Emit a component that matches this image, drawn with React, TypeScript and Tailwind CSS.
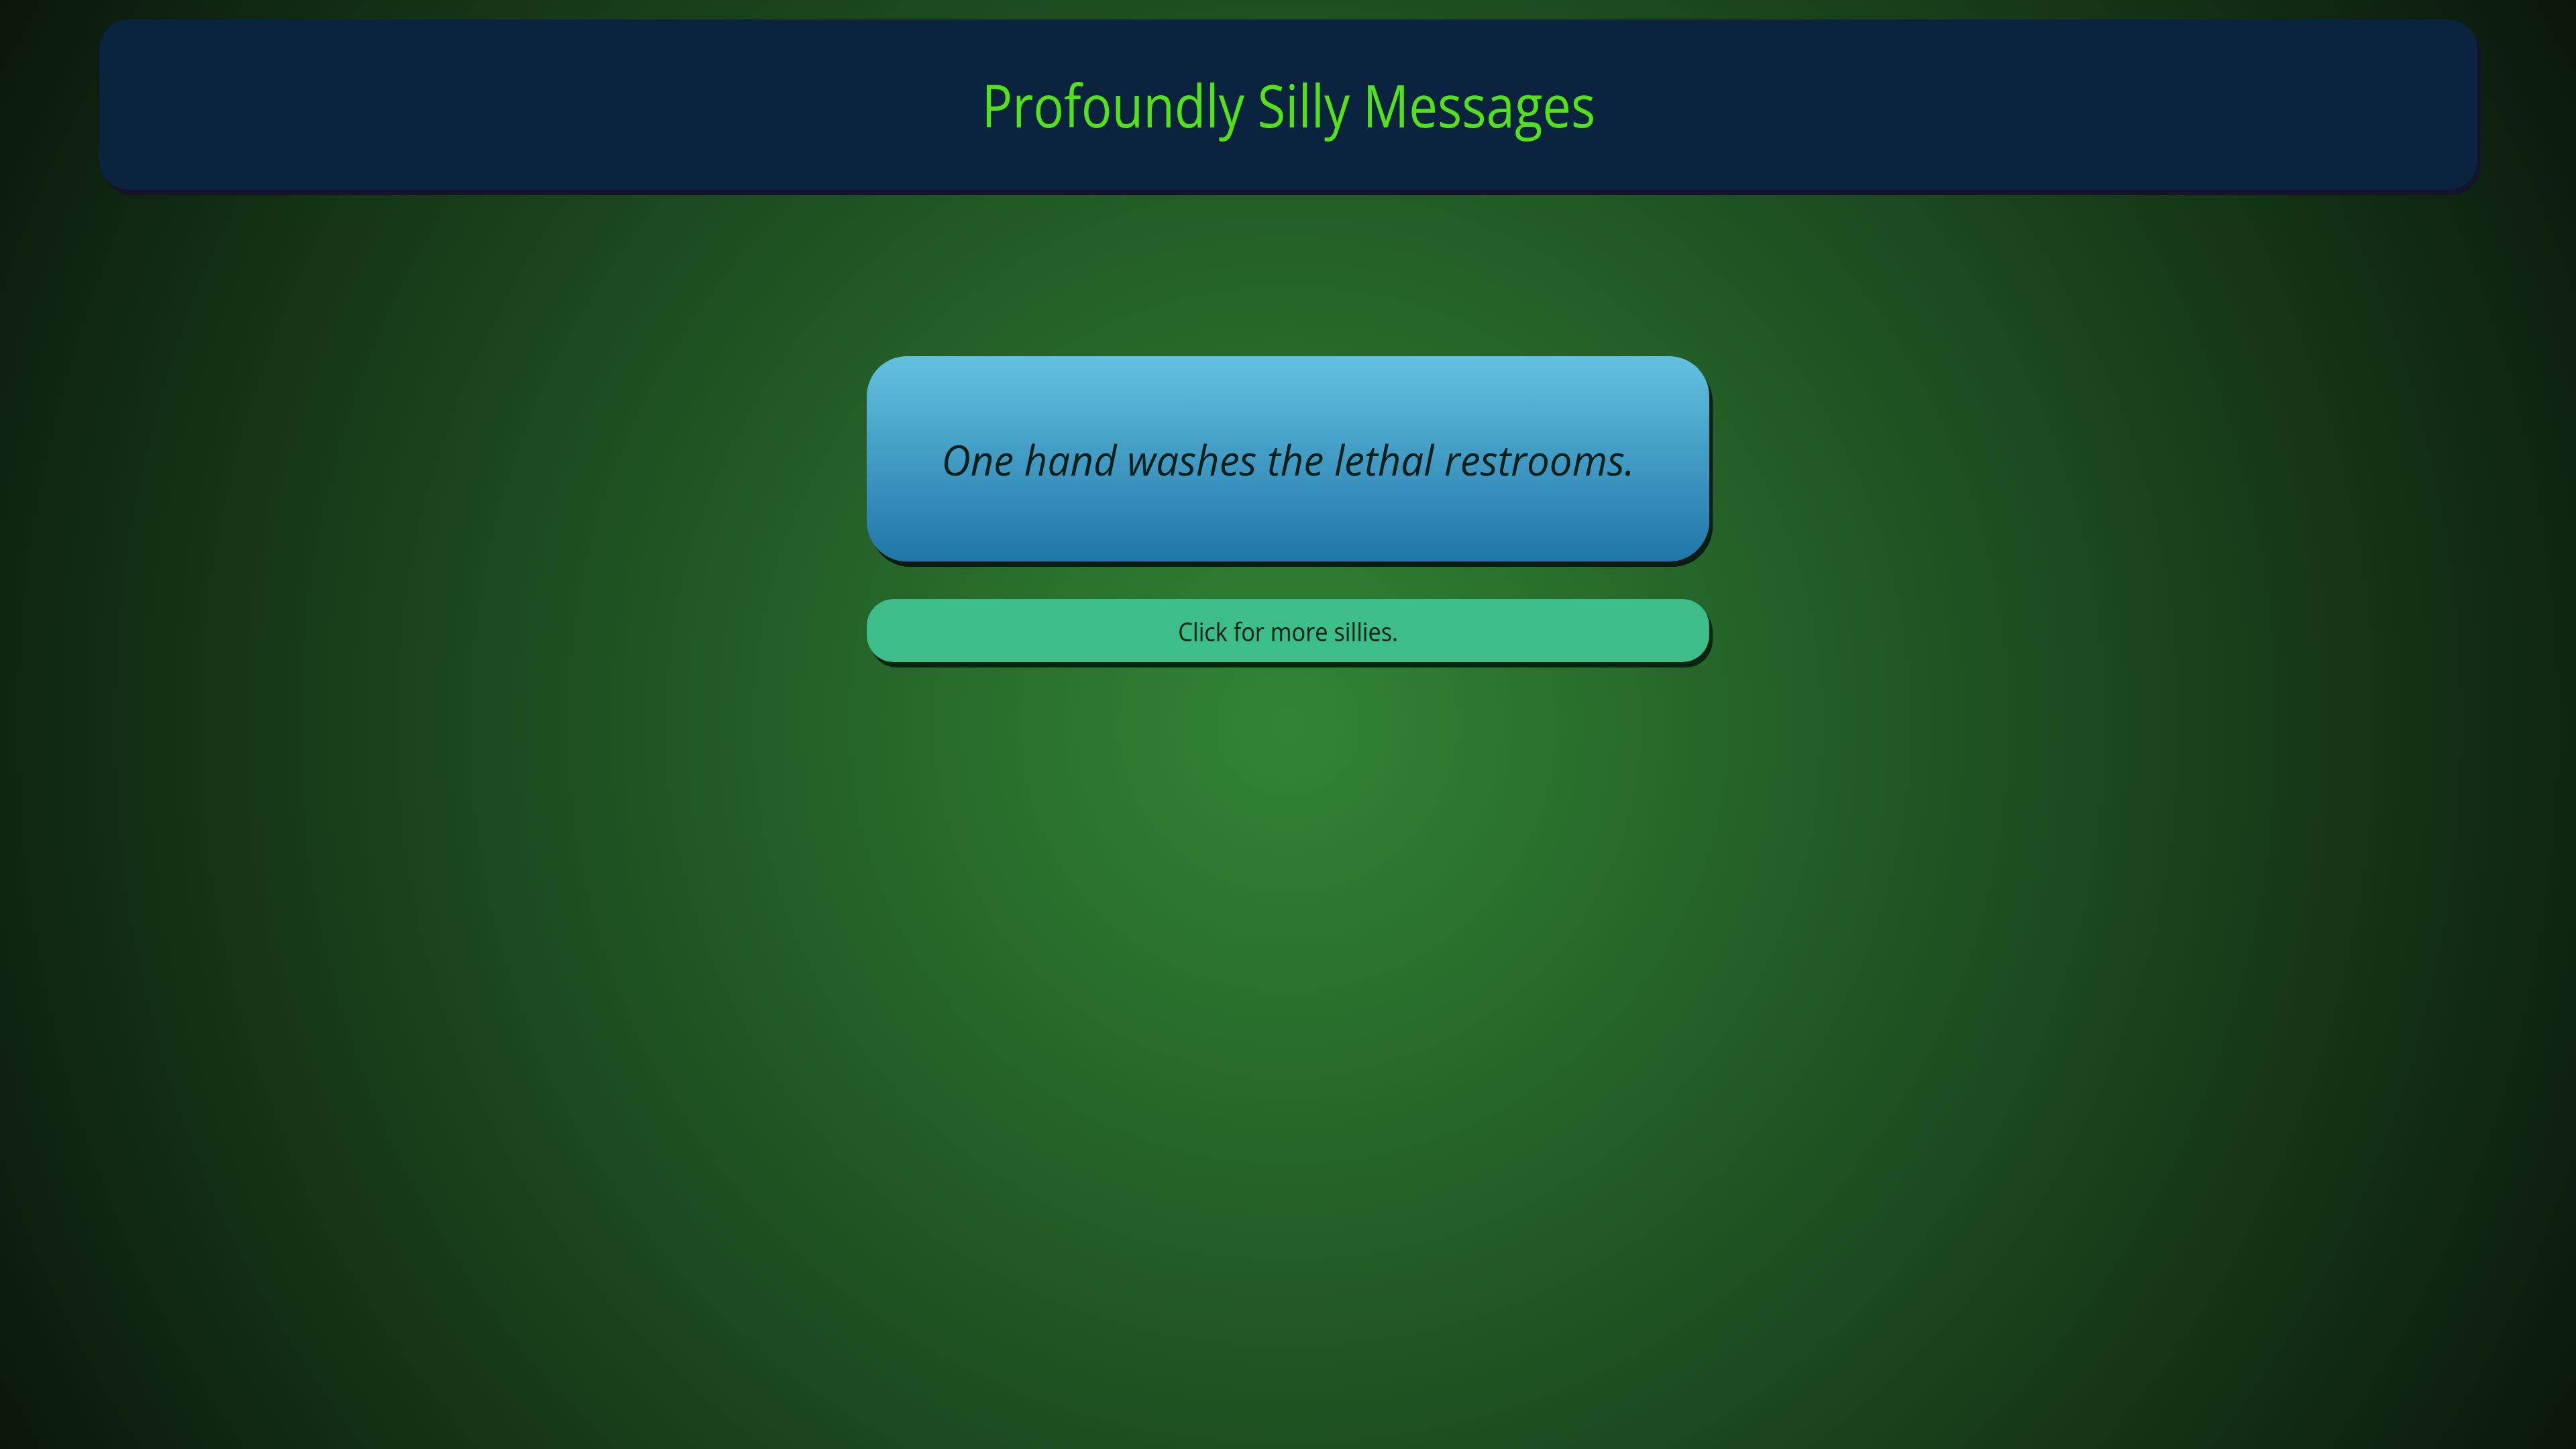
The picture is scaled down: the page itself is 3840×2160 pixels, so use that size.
export default function App() {
  return (
    <div className="min-h-screen w-full flex flex-col bg-[radial-gradient(circle_at_center,#318535_0%,#0a170b_100%)] font-['Open_Sans',sans-serif]">
      <header className="ml-[148px] mr-[147px] mt-[29px] h-[254px] rounded-[44px] bg-[#0a2440] shadow-[5px_8px_0_#14142a] flex items-center justify-center">
        <h1 className="inline-block text-[88px] leading-none font-normal text-[#52e316] scale-x-[0.865]">
          Profoundly Silly Messages
        </h1>
      </header>
      <main className="mt-[248px] flex flex-col items-center">
        <div className="w-[1256px] h-[306px] rounded-[60px] bg-[linear-gradient(to_bottom,#63c1e0,#1f76a8)] shadow-[5px_8px_0_#0a1c14] flex items-center justify-center">
          <p className="inline-block text-[63px] leading-none italic text-[#08201a] scale-x-[0.953]">
            One hand washes the lethal restrooms.
          </p>
        </div>
        <button
          type="button"
          className="mt-[56px] w-[1256px] h-[94px] rounded-[40px] bg-[#3dbd8a] shadow-[5px_8px_0_#0b2410] flex items-center justify-center"
        >
          <span className="inline-block text-[39px] leading-none text-[#0b2414] scale-x-[0.88]">
            Click for more sillies.
          </span>
        </button>
      </main>
    </div>
  );
}
